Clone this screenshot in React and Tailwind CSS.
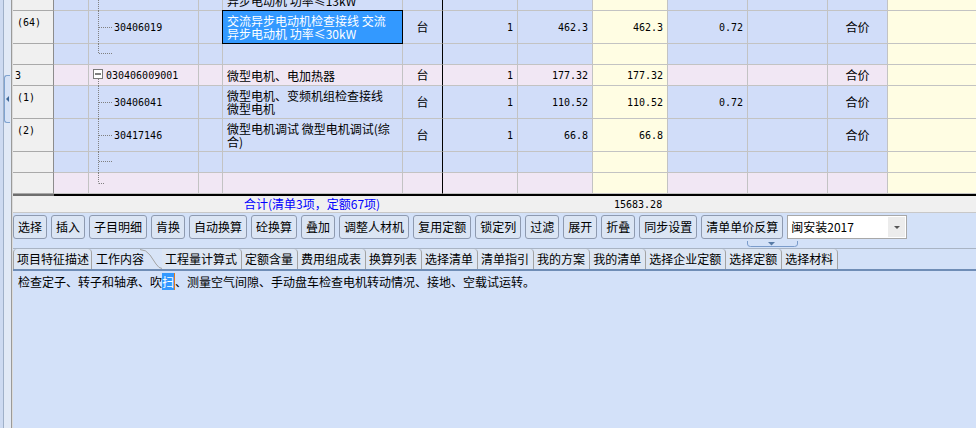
import React from 'react';

const CN = "font-['Noto_Sans_CJK_SC',sans-serif]";
const MONO = "font-['DejaVu_Sans_Mono',monospace] text-[10px]";
const GB = 'border-r border-b border-[#c3c3c3]';
const BLUE = 'bg-[#d1ddf9]';
const PINK = 'bg-[#f1e7f4]';
const YEL = 'bg-[#fffde3]';

function Dot(props) {
  return <line stroke="#808080" strokeWidth="1" strokeDasharray="1 1" {...props} />;
}

function TreeSvg({ h, children }) {
  return (
    <svg className="absolute left-0 top-0" width="30" height={h} viewBox={`0 0 30 ${h}`}>
      {children}
    </svg>
  );
}

function Row({ h, bg, hdr, hdrMid, tree, code, codePl = 'pl-[25px]', name, selected, unit, qty, p1, p2, coef, he, extra = '' }) {
  return (
    <div className={`flex shrink-0 ${h} ${extra}`}>
      <div className={`w-[41px] shrink-0 bg-[#f0f0f0] border-r border-b border-r-[#8c8c8c] border-b-[#a9a9a9] flex ${hdrMid ? 'items-center pl-[2px]' : 'items-start pt-[4px] pl-[4px]'} ${MONO} text-black`}>
        {hdr}
      </div>
      <div className={`w-[35px] shrink-0 ${bg} ${GB}`} />
      <div className={`w-[110px] shrink-0 ${bg} ${GB} relative flex items-center ${codePl} ${MONO} text-black`}>
        {tree}
        <span className="relative">{code}</span>
      </div>
      <div className={`w-[24px] shrink-0 ${bg} ${GB}`} />
      <div className={`w-[180px] shrink-0 ${bg} ${GB} relative flex items-center pl-[4px] text-[12px] leading-[13px] whitespace-nowrap text-black`}>
        {selected ? (
          <div className="absolute left-[-1px] top-[-1px] right-[-1px] bottom-[-1px] border border-black bg-[#3399ff] text-white flex items-center pl-[4px]">
            <div>{name}</div>
          </div>
        ) : (
          <div>{name}</div>
        )}
      </div>
      <div className={`w-[40px] shrink-0 ${bg} border-r border-b border-b-[#c3c3c3] border-r-black flex items-center justify-center text-[12px]`}>
        {unit}
      </div>
      <div className={`w-[75px] shrink-0 ${bg} ${GB} flex items-center justify-end pr-[4px] ${MONO}`}>{qty}</div>
      <div className={`w-[75px] shrink-0 ${bg} ${GB} flex items-center justify-end pr-[4px] ${MONO}`}>{p1}</div>
      <div className={`w-[75px] shrink-0 ${YEL} ${GB} flex items-center justify-end pr-[4px] ${MONO}`}>{p2}</div>
      <div className={`w-[80px] shrink-0 ${bg} ${GB} flex items-center justify-end pr-[4px] ${MONO}`}>{coef}</div>
      <div className={`w-[80px] shrink-0 ${bg} ${GB}`} />
      <div className={`w-[60px] shrink-0 ${bg} ${GB} flex items-center justify-center text-[12px]`}>{he}</div>
      <div className={`flex-1 ${YEL} border-b border-[#c3c3c3]`} />
    </div>
  );
}

const buttons = ['选择', '插入', '子目明细', '肯换', '自动换算', '砼换算', '叠加', '调整人材机', '复用定额', '锁定列', '过滤', '展开', '折叠', '同步设置', '清单单价反算'];
const tabs = ['工程量计算式', '定额含量', '费用组成表', '换算列表', '选择清单', '清单指引', '我的方案', '我的清单', '选择企业定额', '选择定额', '选择材料'];

export default function App() {
  return (
    <div className={`w-[976px] h-[428px] overflow-hidden flex bg-[#d3e1f8] text-black ${CN}`}>
      {/* left collapse strip */}
      <div className="w-[13px] h-full shrink-0 flex">
        <div className="w-[3px] h-full bg-[#cddaf1]" />
        <div className="w-px h-full bg-[#9fb0c8]" />
        <div className="w-[7px] h-full bg-[#e1e9f6]">
          <div className="mt-[75px] w-[6px] h-[48px] border border-r-0 border-[#7fa3d0] rounded-l-[3px] bg-[#d6e2f6] flex items-center justify-center">
            <div className="w-0 h-0 border-y-[3px] border-y-transparent border-r-[3px] border-r-[#3f6898]" />
          </div>
        </div>
        <div className="w-px h-full bg-[#9a9a9a]" />
        <div className="w-px h-full bg-[#dcdcdc]" />
      </div>

      {/* main */}
      <div className="flex-1 min-w-0 flex flex-col">
        {/* grid */}
        <div className="h-[194px] shrink-0 overflow-hidden flex flex-col">
          <Row
            h="h-[33px]"
            extra="mt-[-22px]"
            bg={BLUE}
            hdr="(63)"
            tree={<TreeSvg h={33}><Dot x1="9.5" y1="0" x2="9.5" y2="33" /></TreeSvg>}
            name={<>交流异步电动机检查接线 交流<br />异步电动机 功率≤13kW</>}
          />
          <Row
            h="h-[33px]"
            bg={BLUE}
            hdr="(64)"
            tree={<TreeSvg h={33}><Dot x1="9.5" y1="0" x2="9.5" y2="33" /><Dot x1="10" y1="16.5" x2="24" y2="16.5" /></TreeSvg>}
            code="30406019"
            selected
            name={<>交流异步电动机检查接线 交流<br />异步电动机 功率≤30kW</>}
            unit="台"
            qty="1"
            p1="462.3"
            p2="462.3"
            coef="0.72"
            he="合价"
          />
          <Row
            h="h-[21px]"
            bg={BLUE}
            tree={<TreeSvg h={21}><Dot x1="9.5" y1="0" x2="9.5" y2="9.5" /><Dot x1="10" y1="9.5" x2="24" y2="9.5" /></TreeSvg>}
          />
          <Row
            h="h-[21px]"
            bg={PINK}
            hdr="3"
            hdrMid
            codePl="pl-[17px]"
            tree={
              <TreeSvg h={21}>
                <rect x="4.5" y="4.5" width="9" height="9" fill="#ffffff" stroke="#7a7a7a" strokeWidth="1" />
                <line x1="6" y1="9" x2="12" y2="9" stroke="#000000" strokeWidth="1" />
                <Dot x1="9.5" y1="14" x2="9.5" y2="21" />
              </TreeSvg>
            }
            code="030406009001"
            name="微型电机、电加热器"
            unit="台"
            qty="1"
            p1="177.32"
            p2="177.32"
            he="合价"
          />
          <Row
            h="h-[33px]"
            bg={BLUE}
            hdr="(1)"
            tree={<TreeSvg h={33}><Dot x1="9.5" y1="0" x2="9.5" y2="33" /><Dot x1="10" y1="16.5" x2="24" y2="16.5" /></TreeSvg>}
            code="30406041"
            name={<>微型电机、变频机组检查接线<br />微型电机</>}
            unit="台"
            qty="1"
            p1="110.52"
            p2="110.52"
            coef="0.72"
            he="合价"
          />
          <Row
            h="h-[33px]"
            bg={BLUE}
            hdr="(2)"
            tree={<TreeSvg h={33}><Dot x1="9.5" y1="0" x2="9.5" y2="33" /><Dot x1="10" y1="16.5" x2="24" y2="16.5" /></TreeSvg>}
            code="30417146"
            name={<>微型电机调试 微型电机调试(综<br />合)</>}
            unit="台"
            qty="1"
            p1="66.8"
            p2="66.8"
            he="合价"
          />
          <Row
            h="h-[21px]"
            bg={BLUE}
            tree={<TreeSvg h={21}><Dot x1="9.5" y1="0" x2="9.5" y2="21" /><Dot x1="10" y1="9.5" x2="24" y2="9.5" /></TreeSvg>}
          />
          <Row
            h="h-[21px]"
            bg={PINK}
            tree={<TreeSvg h={21}><Dot x1="9.5" y1="0" x2="9.5" y2="10.5" /><Dot x1="10" y1="10.5" x2="16" y2="10.5" /></TreeSvg>}
          />
        </div>
        <div className="flex h-[2px] shrink-0">
          <div className="w-[41px] bg-[#6e6e6e]" />
          <div className="flex-1 bg-black" />
        </div>
        <div className="h-[17px] shrink-0 bg-[#f0f0f0] border-b border-[#c8c8c8] flex items-center">
          <span className="pl-[231px] w-[601px] shrink-0 text-[#0000ff] text-[12px] leading-[14px] whitespace-nowrap">合计(清单3项，定额67项)</span>
          <span className={`${MONO} text-black`}>15683.28</span>
        </div>

        {/* toolbar */}
        <div className="h-[35px] shrink-0 bg-[#d3e1f8] pt-[2px] flex flex-col">
          <div className="flex gap-[4px] h-[24px]">
            {buttons.map((b) => (
              <div
                key={b}
                className="h-[24px] px-[4px] border border-[#8e9ab0] rounded-[3px] bg-[#dbe5f4] flex items-center text-[12px] whitespace-nowrap"
              >
                {b}
              </div>
            ))}
            <div className="w-[120px] h-[24px] bg-white border border-[#a8a8a8] flex items-center">
              <span className="pl-[3px] text-[12px]">闽安装2017</span>
              <div className="ml-auto mr-[1px] w-[17px] h-[20px] bg-[#ececec] flex items-center justify-center">
                <div className="w-0 h-0 border-x-[3px] border-x-transparent border-t-[3px] border-t-[#555555]" />
              </div>
            </div>
          </div>
          <svg className="ml-[734px] mt-[2px]" width="51" height="7" viewBox="0 0 51 7">
            <path d="M0.5 0 V3 Q0.5 5.5 3.5 5.5 H47.5 Q50.5 5.5 50.5 3 V0" fill="none" stroke="#7b9ccb" strokeWidth="1" />
            <polygon points="21,1 28,1 24.5,4.5" fill="#587ba6" />
          </svg>
        </div>

        {/* tabs */}
        <div className="h-[21px] shrink-0 border-t border-[#a9b4c4] bg-[#d3e1f8] flex text-[12px]">
          <div className="h-full flex items-center border-l border-r border-[#a3a3a3] rounded-tl-[4px] rounded-tr-[4px] bg-[#dde6f3] pl-[3px] pr-[2px] whitespace-nowrap">
            项目特征描述
          </div>
          <div className="relative w-[70px] shrink-0 h-full flex items-center bg-[#d8e4f7] pl-[4px] whitespace-nowrap">
            工作内容
            <svg className="absolute right-0 top-0" width="22" height="20" viewBox="0 0 22 20">
              <path d="M0 0.5 Q6 0.5 10 6 L16 15 Q19 19.5 22 19.5" fill="none" stroke="#a3a3a3" strokeWidth="1" />
            </svg>
          </div>
          {tabs.map((t) => (
            <div
              key={t}
              className="h-full flex items-center border-r border-[#a3a3a3] rounded-tr-[4px] bg-[#dde6f3] pl-[3px] pr-[4px] whitespace-nowrap"
            >
              {t}
            </div>
          ))}
        </div>

        {/* content */}
        <div className="flex-1 border-t-2 border-[#6f8db6] bg-[#d3e1f9] pl-[5px] pt-[2px] text-[12px] leading-[17px] whitespace-nowrap">
          检查定子、转子和轴承、吹<span className="bg-[#3399ff] text-white border-r border-[#e07a1f]">扫</span>、测量空气间隙、手动盘车检查电机转动情况、接地、空载试运转。
        </div>
      </div>
    </div>
  );
}
